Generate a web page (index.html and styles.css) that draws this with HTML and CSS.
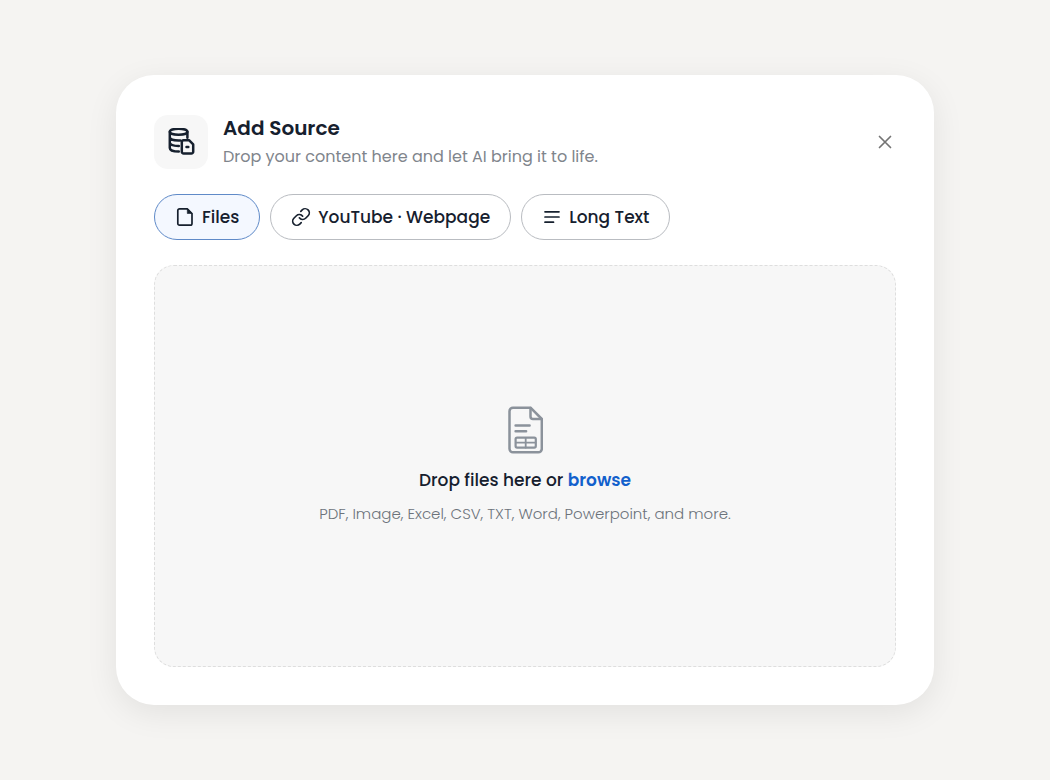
FILE: index.html
```html
<!DOCTYPE html>
<html lang="en">
<head>
<meta charset="utf-8">
<meta name="viewport" content="width=device-width, initial-scale=1">
<title>Add Source</title>
<link rel="stylesheet" href="styles.css">
</head>
<body>
<main class="dialog" role="dialog" aria-labelledby="dialog-title">
  <header class="header">
    <div class="header-icon">
      <svg width="28" height="28" viewBox="0 0 28 28" fill="none" stroke="currentColor" stroke-width="2.5" stroke-linecap="round" stroke-linejoin="round" aria-hidden="true">
        <ellipse cx="11.6" cy="3.8" rx="8.8" ry="3"/>
        <path d="M2.8 4v16c0 2 3.7 3.6 9 3.6M20.4 4v5.8M2.8 9.3c0 2 3.8 3.3 8.8 3.3h1.6M2.8 14.6c0 2 3.7 3.4 9 3.4"/>
        <path d="M16.6 12.2h5.4l4.2 4.2v7.3a1.8 1.8 0 0 1-1.8 1.8h-7.8a1.8 1.8 0 0 1-1.8-1.8V14a1.8 1.8 0 0 1 1.8-1.8z"/>
        <path d="M19.5 19h1.8"/>
      </svg>
    </div>
    <div class="heading">
      <h1 class="title" id="dialog-title">Add Source</h1>
      <p class="subtitle">Drop your content here and let AI bring it to life.</p>
    </div>
    <button class="close" type="button" aria-label="Close">
      <svg width="14" height="14" viewBox="0 0 14 14" fill="none" stroke="currentColor" stroke-width="1.7" stroke-linecap="round" aria-hidden="true"><path d="M1.5 1.5l11 11M12.5 1.5l-11 11"/></svg>
    </button>
  </header>
  <div class="tabs" role="tablist">
    <button class="tab tab-active" type="button" role="tab" aria-selected="true">
      <svg width="20" height="20" viewBox="0 0 20 20" fill="none" stroke="currentColor" stroke-width="1.7" stroke-linejoin="round" aria-hidden="true"><path d="M4.5 1.8h7.8L17 6.5v10a1.7 1.7 0 0 1-1.7 1.7H4.5a1.7 1.7 0 0 1-1.7-1.7v-13a1.7 1.7 0 0 1 1.7-1.7z"/><path d="M12.3 1.8v4.7H17z" fill="currentColor" stroke-width="0.6"/></svg>
      Files
    </button>
    <button class="tab" type="button" role="tab" aria-selected="false">
      <svg width="20" height="20" viewBox="0 0 24 24" fill="none" stroke="currentColor" stroke-width="2" stroke-linecap="round" stroke-linejoin="round" aria-hidden="true"><path d="M10 13a5 5 0 0 0 7.54.54l3-3a5 5 0 0 0-7.07-7.07l-1.72 1.71"/><path d="M14 11a5 5 0 0 0-7.54-.54l-3 3a5 5 0 0 0 7.07 7.07l1.71-1.71"/></svg>
      YouTube · Webpage
    </button>
    <button class="tab" type="button" role="tab" aria-selected="false">
      <svg width="20" height="20" viewBox="0 0 20 20" fill="none" stroke="currentColor" stroke-width="1.7" stroke-linecap="round" aria-hidden="true"><path d="M3 4.8h14M3 10h14M3 15.2h8.5"/></svg>
      Long Text
    </button>
  </div>
  <section class="dropzone" aria-label="File upload">
    <svg width="36" height="48" viewBox="0 0 36 48" fill="none" stroke="currentColor" stroke-width="2.5" stroke-linecap="round" stroke-linejoin="round" aria-hidden="true">
      <path d="M6 1.7h17.5L34.8 13v29.8a3.5 3.5 0 0 1-3.5 3.5H6a3.5 3.5 0 0 1-3.5-3.5V5.2A3.5 3.5 0 0 1 6 1.7z"/>
      <path d="M23.5 2v8.5a2.5 2.5 0 0 0 2.5 2.5h8.5"/>
      <path d="M8.6 19.5h14M8.6 25.3h10.5"/>
      <rect x="8.6" y="31.6" width="20.2" height="10" rx="1.5" stroke-width="2.2"/>
      <path d="M18.7 32v9.5M9 36.6h19.5" stroke-width="1.8"/>
    </svg>
    <p class="prompt">Drop files here or <a class="browse" href="#">browse</a></p>
    <p class="formats">PDF, Image, Excel, CSV, TXT, Word, Powerpoint, and more.</p>
  </section>
</main>
</body>
</html>
```
FILE: styles.css
```css
* { box-sizing: border-box; }

body {
  margin: 0;
  min-height: 100vh;
  padding: 75px 24px;
  display: flex;
  justify-content: center;
  background: #f5f4f2;
  color: #16202e;
  font-family: Poppins, Inter, sans-serif;
}

.dialog {
  width: 100%;
  max-width: 818px;
  padding: 38px;
  display: flex;
  flex-direction: column;
  border-radius: 38px;
  background: #fff;
  box-shadow: 0 8px 32px rgba(0, 0, 0, 0.08);
}

.header {
  display: flex;
  align-items: center;
  gap: 15px;
}

.header-icon {
  width: 54px;
  height: 54px;
  flex: none;
  display: grid;
  place-items: center;
  border-radius: 14px;
  background: #f7f7f7;
}

.heading { flex: 1; }

.title,
.subtitle,
.prompt,
.formats { margin: 0; }

.title {
  font-size: 20px;
  font-weight: 600;
  line-height: 30px;
}

.subtitle {
  margin-top: 1px;
  color: #7f858c;
  font-size: 16px;
  line-height: 26px;
}

.close {
  width: 22px;
  height: 22px;
  padding: 0;
  display: grid;
  place-items: center;
  border: 0;
  background: none;
  color: #747474;
  cursor: pointer;
}

.tabs {
  margin-top: 24px;
  display: flex;
  flex-wrap: wrap;
  gap: 10px;
}

.tab {
  height: 46px;
  padding: 0 20px;
  display: flex;
  align-items: center;
  gap: 7px;
  border: 1px solid #b9bcc1;
  border-radius: 23px;
  background: #fff;
  color: inherit;
  font: 500 17px/26px Poppins, Inter, sans-serif;
  cursor: pointer;
}

.tab-active {
  border-color: #5f8ac8;
  background: #f4f8ff;
}

.dropzone {
  flex: 1;
  margin-top: 25px;
  padding: 24px;
  display: flex;
  flex-direction: column;
  align-items: center;
  justify-content: center;
  border: 1px dashed #dedede;
  border-radius: 20px;
  background: #f7f7f7;
  color: #8b929b;
  text-align: center;
}

.prompt {
  margin-top: 12px;
  color: #16202e;
  font-size: 17px;
  font-weight: 500;
  line-height: 28px;
}

.browse {
  color: #1260cc;
  font-weight: 600;
  text-decoration: none;
}

.formats {
  margin-top: 8px;
  color: #6c737b;
  font-size: 15px;
  font-weight: 300;
  line-height: 24px;
}
```
